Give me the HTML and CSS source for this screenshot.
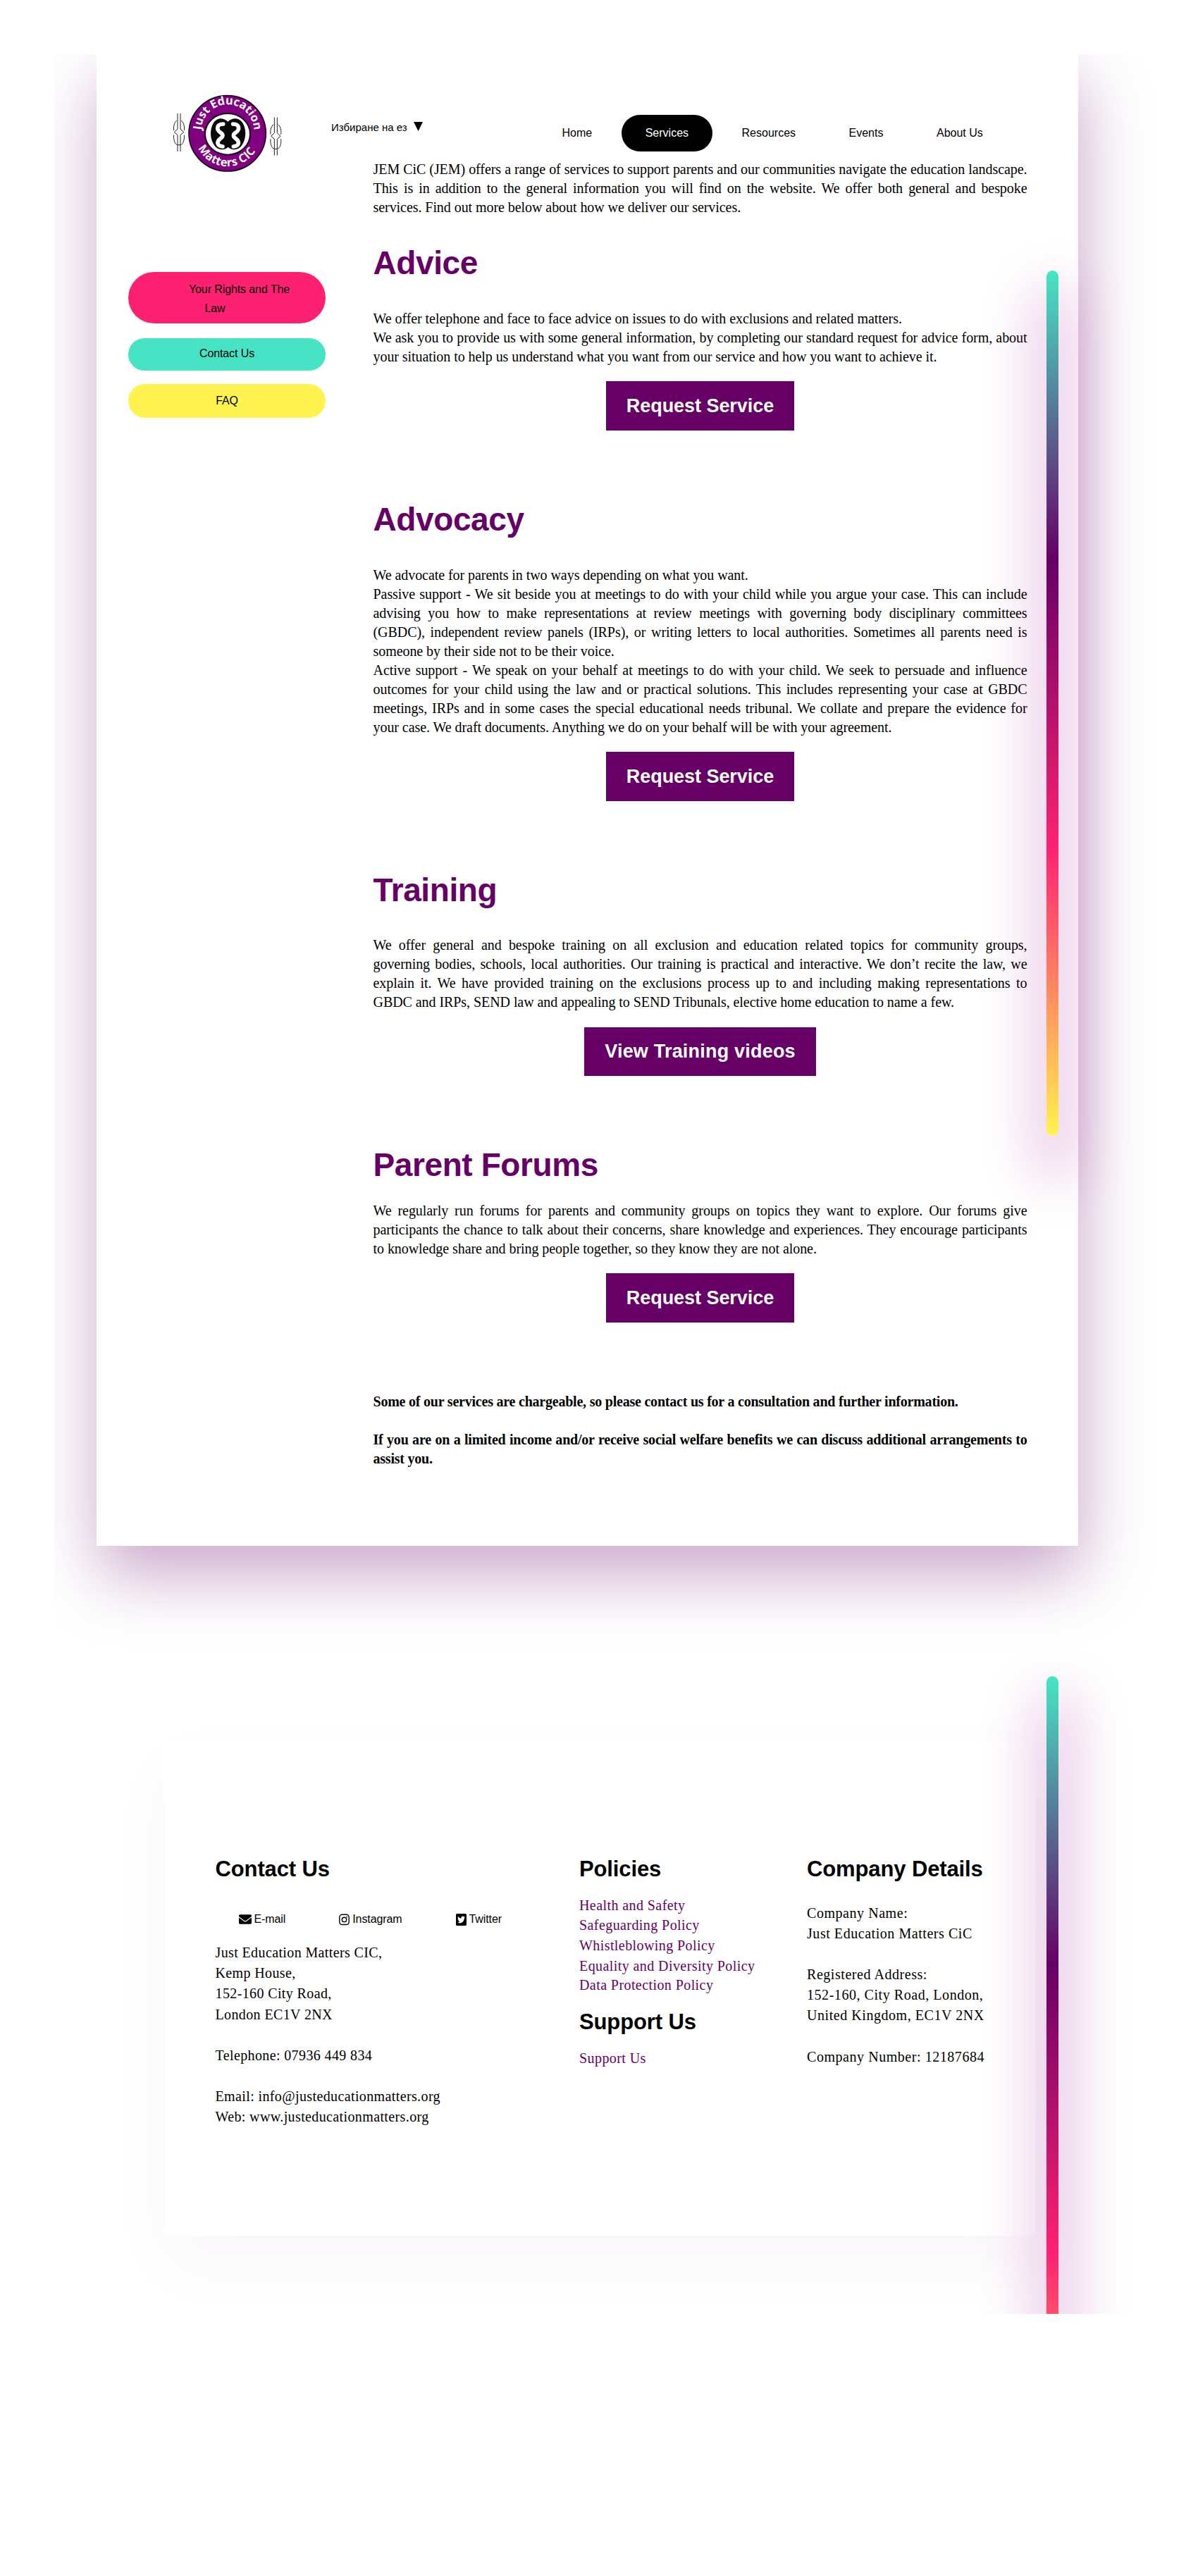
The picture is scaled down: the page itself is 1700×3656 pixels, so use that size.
FILE: index.html
```html
<!DOCTYPE html>
<html lang="en">
<head>
<meta charset="utf-8">
<title>Just Education Matters CiC - Services</title>
<link rel="stylesheet" href="styles.css">
</head>
<body>
<div class="page">
  <section class="card">
    <header class="header">
      <svg class="logo" viewBox="0 0 600 420" role="img" aria-label="Just Education Matters CIC">
        <defs>
          <path id="arc-top" d="M197 197A112 112 0 1 1 421 197"/>
          <path id="arc-bottom" d="M178 258A140 140 0 0 0 440 258"/>
          <g id="knot" fill="none" stroke="#222" stroke-width="3">
            <path d="M18 0V66L4 80L18 92V162M30 0V66L44 80L30 92V162"/>
            <path d="M14 30C3 40 0 56 2 72M2 92C0 112 6 132 18 134H30C42 132 48 112 46 92M46 72C48 56 45 40 34 30"/>
          </g>
        </defs>
        <use href="#knot" x="78" y="123"/>
        <use href="#knot" x="490" y="140"/>
        <ellipse cx="308" cy="208" rx="164" ry="161" fill="#80007f" stroke="#150015" stroke-width="5"/>
        <ellipse cx="309" cy="211" rx="96" ry="88" fill="#fff" stroke="#150015" stroke-width="6"/>
        <path d="M310 158C290 138 262 140 248 165C232 192 234 232 252 258C266 280 296 282 311 266C326 282 356 280 370 258C388 232 390 192 374 165C360 140 330 138 310 158Z" fill="#0a0a0a"/>
        <g fill="none" stroke="#fff" stroke-width="17" stroke-linecap="round" stroke-linejoin="round">
          <path d="M290 168C262 168 260 192 278 204C292 212 290 222 278 230C260 244 264 262 288 264"/>
          <path d="M332 168C360 168 362 192 344 204C330 212 332 222 344 230C362 244 358 262 334 264"/>
        </g>
        <path d="M311 228L328 258L311 250L294 258Z" fill="#0a0a0a"/>
        <text class="logo-text"><textPath href="#arc-top" startOffset="4" textLength="345">Just Education</textPath></text>
        <text class="logo-text"><textPath href="#arc-bottom" startOffset="14" textLength="296">Matters CIC</textPath></text>
      </svg>
      <div class="language"><span>Избиране на ез</span><svg width="13" height="13" viewBox="0 0 13 13"><path d="M0 0H13L6.5 13Z"/></svg></div>
      <nav class="nav">
        <a>Home</a><a class="active">Services</a><a>Resources</a><a>Events</a><a>About Us</a>
      </nav>
    </header>
    <div class="columns">
      <aside class="side">
        <a class="pill pink">Your Rights and The<br>Law</a>
        <a class="pill teal">Contact Us</a>
        <a class="pill yellow">FAQ</a>
      </aside>
      <main class="main">
        <p>JEM CiC (JEM) offers a range of services to support parents and our communities navigate the education landscape. This is in addition to the general information you will find on the website. We offer both general and bespoke services. Find out more below about how we deliver our services.</p>
        <h1 class="first">Advice</h1>
        <p>We offer telephone and face to face advice on issues to do with exclusions and related matters.</p>
        <p>We ask you to provide us with some general information, by completing our standard request for advice form, about your situation to help us understand what you want from our service and how you want to achieve it.</p>
        <a class="button">Request Service</a>
        <h1>Advocacy</h1>
        <p>We advocate for parents in two ways depending on what you want.</p>
        <p>Passive support - We sit beside you at meetings to do with your child while you argue your case. This can include advising you how to make representations at review meetings with governing body disciplinary committees (GBDC), independent review panels (IRPs), or writing letters to local authorities. Sometimes all parents need is someone by their side not to be their voice.</p>
        <p>Active support - We speak on your behalf at meetings to do with your child. We seek to persuade and influence outcomes for your child using the law and or practical solutions. This includes representing your case at GBDC meetings, IRPs and in some cases the special educational needs tribunal. We collate and prepare the evidence for your case. We draft documents. Anything we do on your behalf will be with your agreement.</p>
        <a class="button">Request Service</a>
        <h1 class="training">Training</h1>
        <p>We offer general and bespoke training on all exclusion and education related topics for community groups, governing bodies, schools, local authorities. Our training is practical and interactive. We don’t recite the law, we explain it. We have provided training on the exclusions process up to and including making representations to GBDC and IRPs, SEND law and appealing to SEND Tribunals, elective home education to name a few.</p>
        <a class="button videos">View Training videos</a>
        <h1 class="forums">Parent Forums</h1>
        <p>We regularly run forums for parents and community groups on topics they want to explore. Our forums give participants the chance to talk about their concerns, share knowledge and experiences. They encourage participants to knowledge share and bring people together, so they know they are not alone.</p>
        <a class="button">Request Service</a>
        <div class="notes">
          <p>Some of our services are chargeable, so please contact us for a consultation and further information.</p>
          <p>If you are on a limited income and/or receive social welfare benefits we can discuss additional arrangements to assist you.</p>
        </div>
      </main>
    </div>
    <div class="bar"></div>
  </section>
  <footer class="footer">
    <div class="contact">
      <h2>Contact Us</h2>
      <div class="social">
        <a><svg width="18" height="14" viewBox="0 64 512 384"><path d="M502.3 190.8c3.900-3.100 9.700-.2 9.700 4.700V400c0 26.500-21.500 48-48 48H48c-26.500 0-48-21.500-48-48V195.600c0-5 5.700-7.800 9.700-4.700 22.400 17.400 52.100 39.500 154.100 113.600 21.100 15.400 56.700 47.800 92.200 47.600 35.700.3 72-32.800 92.300-47.600 102-74.100 131.600-96.300 154-113.700zM256 320c23.200.4 56.600-29.200 73.400-41.400 132.700-96.300 142.800-104.700 173.400-128.700 5.800-4.500 9.200-11.500 9.200-18.900v-19c0-26.500-21.500-48-48-48H48c-26.500 0-48 21.500-48 48v19c0 7.400 3.400 14.300 9.200 18.900 30.600 23.900 40.700 32.400 173.400 128.700 16.800 12.200 50.200 41.800 73.400 41.400z"/></svg>E-mail</a>
        <a><svg width="15" height="17" viewBox="0 0 15 17"><g fill="none" stroke="#000" stroke-width="1.4"><rect x=".8" y="1.300" width="13.400" height="14.200" rx="3.800"/><circle cx="7.500" cy="8.400" r="3.200"/></g><circle cx="11.200" cy="4.600" r=".9"/></svg>Instagram</a>
        <a><svg width="15" height="17" viewBox="0 32 448 448" preserveAspectRatio="none"><path d="M400 32H48C21.500 32 0 53.500 0 80v352c0 26.500 21.500 48 48 48h352c26.500 0 48-21.500 48-48V80c0-26.500-21.500-48-48-48zm-48.900 158.800c.2 2.800.2 5.700.2 8.500 0 86.700-66 186.600-186.600 186.600-37.200 0-71.700-10.800-100.700-29.400 5.300.6 10.400.8 15.800.8 30.700 0 58.900-10.400 81.400-28-28.800-.6-53-19.500-61.300-45.500 10.100 1.500 19.200 1.500 29.600-1.200-30-6.100-52.500-32.500-52.500-64.400v-.8c8.700 4.900 18.900 7.900 29.600 8.300a65.450 65.450 0 0 1-29.200-54.600c0-12.200 3.200-23.400 8.900-33.100 32.300 39.800 80.800 65.800 135.200 68.600-9.300-44.500 24-80.600 64-80.600 18.900 0 35.900 7.900 47.900 20.700 14.800-2.800 29-8.300 41.600-15.800-4.900 15.200-15.200 28-28.800 36.100 13.200-1.400 26-5.100 37.800-10.200-8.900 13.100-20.100 24.700-32.900 34z"/></svg>Twitter</a>
      </div>
      <p>Just Education Matters CIC,<br>Kemp House,<br>152-160 City Road,<br>London EC1V 2NX<br><br>Telephone: 07936 449 834<br><br>Email: info@justeducationmatters.org<br>Web: www.justeducationmatters.org</p>
    </div>
    <div class="policies">
      <h2>Policies</h2>
      <ul>
        <li class="tight">Health and Safety</li>
        <li>Safeguarding Policy</li>
        <li>Whistleblowing Policy</li>
        <li class="tight">Equality and Diversity Policy</li>
        <li>Data Protection Policy</li>
      </ul>
      <h2>Support Us</h2>
      <ul class="support"><li>Support Us</li></ul>
    </div>
    <div class="company">
      <h2>Company Details</h2>
      <p>Company Name:<br>Just Education Matters CiC<br><br>Registered Address:<br>152-160, City Road, London,<br>United Kingdom, EC1V 2NX<br><br>Company Number: 12187684</p>
    </div>
    <div class="bar"></div>
  </footer>
</div>
</body>
</html>
```
FILE: styles.css
```css
* { box-sizing: border-box; }

body {
  margin: 0;
  height: 3656px;
  background: #fff;
  color: #000;
  font-family: "Liberation Serif", serif;
}

h1, h2, p, ul { margin: 0; padding: 0; }

.page {
  height: 3284px;
  padding: 77px 0 0 60px;
  margin-left: 77px;
  overflow: hidden;
  clip-path: inset(77px 0 0 0);
}

.card {
  position: relative;
  width: 1393px;
  height: 2117px;
  background: #fff;
  box-shadow: 4px 40px 90px rgba(102, 0, 102, .35);
}

.header {
  display: flex;
  align-items: flex-start;
  height: 150px;
  padding-left: 83px;
  font-family: "Liberation Sans", sans-serif;
}

.logo { width: 200px; height: 140px; margin-top: 43px; }

.logo-text {
  font: 700 49px "Open Sans", sans-serif;
  fill: #fff;
}

.language {
  display: flex;
  gap: 9px;
  width: 293.500px;
  margin: 95px 0 0 50px;
  font-size: 15px;
  line-height: 18px;
}
.language svg { margin-top: 1px; }

.nav {
  display: flex;
  gap: 7.500px;
  margin-top: 86px;
  font-size: 16px;
  line-height: 52px;
}
.nav a { padding: 0 34px; height: 52px; }
.nav .active { border-radius: 26px; background: #000; color: #fff; }

.columns { display: flex; gap: 67.500px; padding-left: 45px; }

.side {
  display: flex;
  flex-direction: column;
  width: 280px;
  padding-top: 159px;
  font: 16px/27px "Liberation Sans", sans-serif;
  letter-spacing: -.1px;
  text-align: center;
}
.pill { padding-right: 34px; border-radius: 37px; }
.pink { height: 73px; padding-top: 11px; background: #ff2171; text-indent: 69px; }
.teal { height: 46px; margin-top: 21px; padding-top: 8px; background: #46e4c4; text-indent: 34px; }
.yellow { height: 48px; margin-top: 19px; padding-top: 10px; background: #fff44f; text-indent: 34px; }

.main {
  display: flex;
  flex-direction: column;
  width: 928px;
  font-size: 20px;
  line-height: 27px;
  letter-spacing: -.06px;
  text-align: justify;
}

h1 {
  margin: 99px 0 39px;
  color: #606;
  font: 700 46px/54px "Liberation Sans", sans-serif;
  letter-spacing: -.4px;
  text-align: left;
}
h1.first { margin: 38px 0 39px; }
h1.training { margin-bottom: 38px; }
h1.forums { margin-bottom: 25px; }

.button {
  align-self: center;
  width: 267px;
  margin-top: 21px;
  background: #606;
  color: #fff;
  font: 700 27px/70px "Liberation Sans", sans-serif;
  letter-spacing: -.05px;
  text-align: center;
}
.button.videos { width: 329px; margin-top: 22px; line-height: 69px; letter-spacing: .2px; }

.notes { margin-top: 99px; font-weight: 700; letter-spacing: -.22px; }
.notes p + p { margin-top: 27px; }

.bar {
  position: absolute;
  top: 307px;
  left: 1348px;
  width: 17px;
  height: 1228px;
  border-radius: 9px;
  background: linear-gradient(#46e6c4, #606, #ff2171, #fff44f);
  box-shadow: 4px 43px 78px 20px rgba(165, 0, 145, .24);
}

.footer {
  position: relative;
  display: flex;
  width: 1236px;
  height: 703px;
  margin: 276px 0 0 96px;
  padding: 165px 0 0 72.500px;
  background: #fff;
  box-shadow: 4px 40px 90px rgba(102, 0, 102, .04);
  font-size: 20px;
  line-height: 29.170px;
  letter-spacing: .48px;
}
.footer .bar { top: -91px; left: 1252px; }

h2 {
  font: 700 31px/36px "Liberation Sans", sans-serif;
  letter-spacing: -.12px;
}

.contact { width: 516.500px; }
.contact p { letter-spacing: .38px; }
.policies { width: 323px; color: #606; letter-spacing: .42px; }
.policies h2 { color: #000; }
.policies ul { list-style: none; margin: 19px 0 19px; }
.policies li.tight { height: 27.500px; }
.policies .support { margin-top: 19px; }
.company p { margin-top: 29.500px; letter-spacing: .55px; }

.social {
  display: flex;
  gap: 76px;
  margin: 43px 0 23px 33px;
  font: 16px/20px "Liberation Sans", sans-serif;
  letter-spacing: -.1px;
}
.social a { display: flex; align-items: center; gap: 4px; }
```
